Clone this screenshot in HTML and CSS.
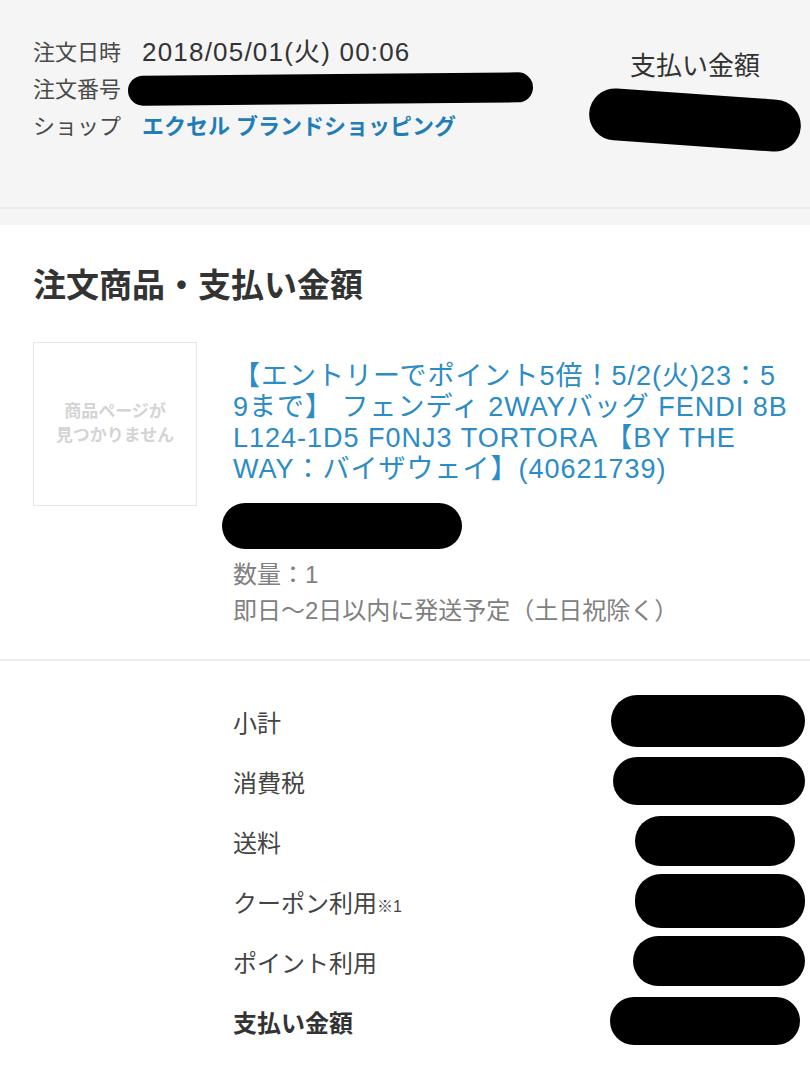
FILE: index.html
```html
<!DOCTYPE html>
<html lang="ja">
<head>
    <meta charset="UTF-8">
    <meta name="viewport" content="width=device-width, initial-scale=1.0">
    <title>注文詳細</title>
    <link rel="stylesheet" href="styles.css">
</head>
<body>

    <div class="top">
        <div class="order-head">
            <div class="order-info">
                <div class="info-row">
                    <span class="info-label">注文日時</span>
                    <span class="info-value">2018/05/01(火) 00:06</span>
                </div>
                <div class="info-row">
                    <span class="info-label">注文番号</span>
                    <span class="mask mask-number"></span>
                </div>
                <div class="info-row">
                    <span class="info-label">ショップ</span>
                    <a class="shop-link" href="#">エクセル ブランドショッピング</a>
                </div>
            </div>
            <div class="pay-box">
                <div class="pay-title">支払い金額</div>
                <span class="mask mask-total"></span>
            </div>
        </div>
    </div>

    <div class="section">
        <h2>注文商品・支払い金額</h2>
        <div class="item">
            <div class="item-thumb">
                <span>商品ページが<br>見つかりません</span>
            </div>
            <div class="item-body">
                <a class="item-name" href="#">【エントリーでポイント5倍！5/2(火)23：5<br>9まで】 フェンディ 2WAYバッグ FENDI 8B<br>L124-1D5 F0NJ3 TORTORA 【BY THE<br>WAY：バイザウェイ】(40621739)</a>
                <span class="mask mask-price"></span>
                <p class="item-note">数量：1</p>
                <p class="item-note">即日〜2日以内に発送予定（土日祝除く）</p>
            </div>
        </div>
    </div>

    <div class="summary">
        <div class="sum-row">
            <span>小計</span>
            <span class="mask m1"></span>
        </div>
        <div class="sum-row">
            <span>消費税</span>
            <span class="mask m2"></span>
        </div>
        <div class="sum-row">
            <span>送料</span>
            <span class="mask m3"></span>
        </div>
        <div class="sum-row">
            <span>クーポン利用<small>※1</small></span>
            <span class="mask m4"></span>
        </div>
        <div class="sum-row">
            <span>ポイント利用</span>
            <span class="mask m5"></span>
        </div>
        <div class="sum-row total">
            <span>支払い金額</span>
            <span class="mask m6"></span>
        </div>
    </div>

</body>
</html>
```

FILE: styles.css
```css
body {
    margin: 0;
    background-color: #fff;
    font-family: "Liberation Sans", "Noto Sans CJK JP", sans-serif;
    color: #444;
}
a {
    text-decoration: none;
}
p {
    margin: 0;
}

/* redacted values */
.mask {
    display: inline-block;
    background-color: #000;
    border-radius: 26px;
}

.top {
    background-color: #f5f5f5;
    padding-bottom: 16px;
}
.order-head {
    display: flex;
    justify-content: space-between;
    padding: 31px 10px 0 33px;
    height: 176px;
    border-bottom: 2px solid #ebebeb;
}
.info-row {
    display: flex;
    align-items: center;
    height: 37px;
}
.info-label {
    width: 109px;
    font-size: 22px;
    color: #4a4a4a;
}
.info-value {
    font-size: 26px;
    letter-spacing: 1.2px;
    color: #333;
}
.shop-link {
    font-size: 22px;
    font-weight: bold;
    color: #1f7db8;
}
.mask-number {
    width: 405px;
    height: 30px;
    margin-left: -14px;
    margin-top: 4px;
    transform: rotate(-0.5deg);
}
.pay-box {
    width: 210px;
    display: flex;
    flex-direction: column;
    align-items: center;
}
.pay-title {
    font-size: 26px;
    color: #333;
    margin-top: 14px;
}
.mask-total {
    width: 212px;
    height: 52px;
    margin-top: 12px;
    transform: rotate(4deg);
}

.section {
    padding: 41px 10px 0 33px;
}
h2 {
    margin: 0;
    font-size: 33px;
    font-weight: bold;
    color: #333;
    line-height: 40px;
}
.item {
    display: flex;
    gap: 36px;
    margin-top: 36px;
    padding-bottom: 30px;
}
.item-thumb {
    flex: none;
    width: 162px;
    height: 162px;
    border: 1px solid #e6e6e6;
    display: flex;
    align-items: center;
    justify-content: center;
    text-align: center;
    font-size: 17px;
    font-weight: bold;
    color: #d4d4d4;
    line-height: 24px;
}
.item-body {
    flex: 1;
    padding-top: 19px;
}
.item-name {
    display: block;
    font-size: 27px;
    line-height: 31px;
    letter-spacing: 1px;
    white-space: nowrap;
    color: #2b8cc6;
}
.mask-price {
    width: 240px;
    height: 46px;
    margin: 18px 0 4px -11px;
}
.item-note {
    font-size: 24px;
    line-height: 36px;
    color: #808080;
}

.summary {
    border-top: 2px solid #eee;
    padding: 30px 5px 0 233px;
}
.sum-row {
    display: flex;
    justify-content: space-between;
    align-items: center;
    height: 60px;
    font-size: 24px;
    color: #444;
}
.sum-row small {
    font-size: 16px;
}
.sum-row.total {
    font-weight: bold;
    color: #333;
}
.m1 { width: 194px; height: 52px; }
.m2 { width: 192px; height: 48px; }
.m3 { width: 160px; height: 50px; margin-right: 10px; }
.m4 { width: 170px; height: 54px; }
.m5 { width: 172px; height: 50px; }
.m6 { width: 190px; height: 48px; margin-right: 5px; }
```
